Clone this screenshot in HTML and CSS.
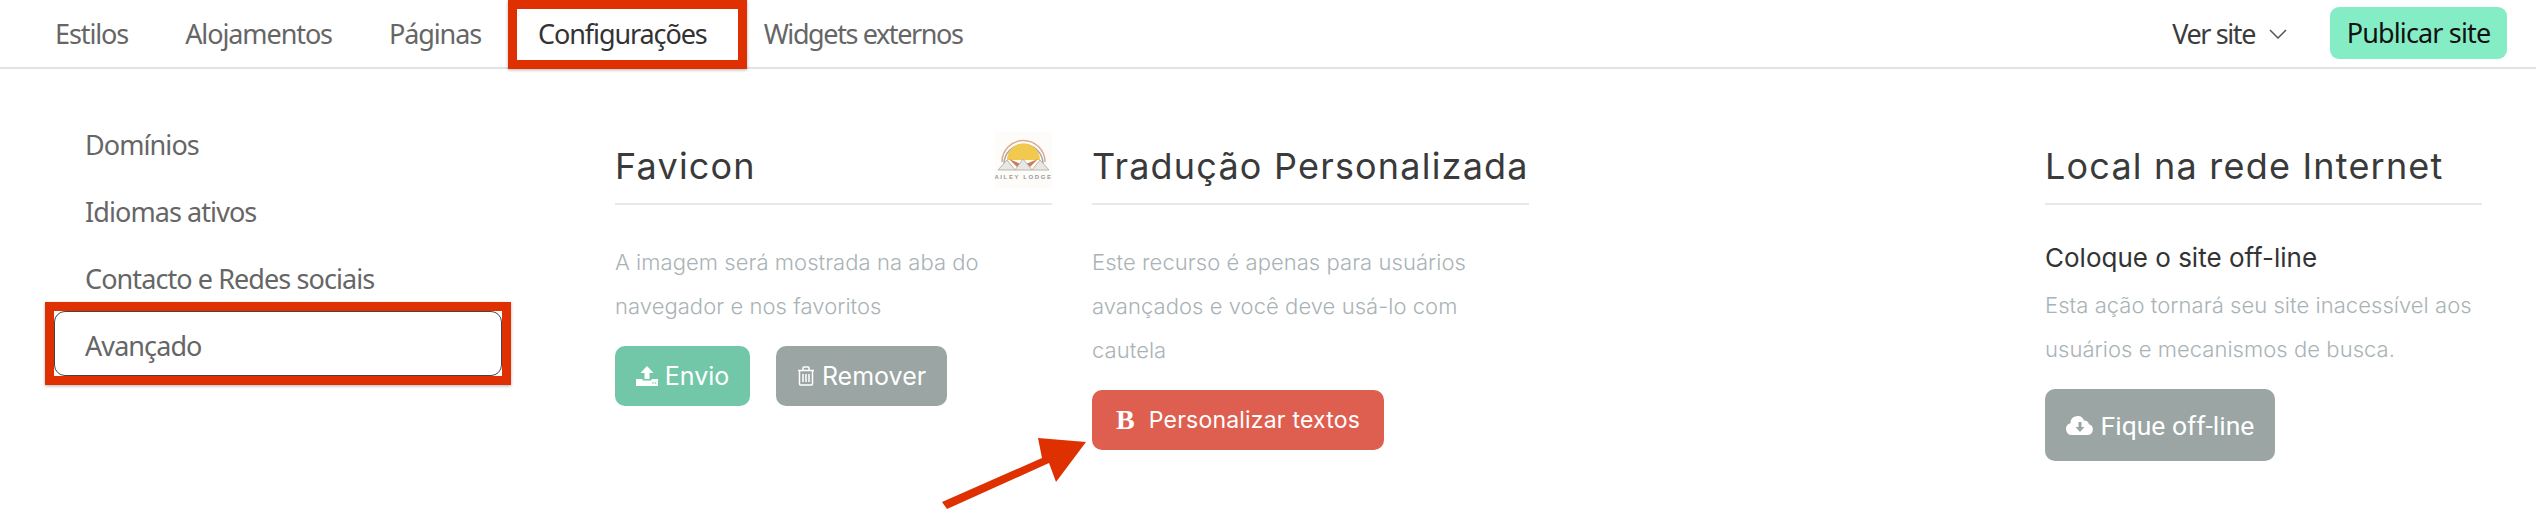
FILE: index.html
```html
<!DOCTYPE html>
<html lang="pt">
<head>
<meta charset="utf-8">
<title>Configurações</title>
<link rel="stylesheet" href="styles.css">
</head>
<body>
<header class="topbar">
  <nav class="tabs">
    <a class="tab">Estilos</a>
    <a class="tab">Alojamentos</a>
    <a class="tab">Páginas</a>
    <a class="tab tab-active">Configurações</a>
    <a class="tab tab-narrow">Widgets externos</a>
  </nav>
  <div class="actions">
    <a class="view-site">Ver site
      <svg class="chevron" viewBox="0 0 18 10" width="18" height="10"><path d="M1 1l8 8 8-8" fill="none" stroke="#555" stroke-width="1.5"/></svg>
    </a>
    <a class="publish">Publicar site</a>
  </div>
</header>
<main class="content">
  <aside class="side">
    <a class="side-item">Domínios</a>
    <a class="side-item">Idiomas ativos</a>
    <a class="side-item">Contacto e Redes sociais</a>
    <a class="side-item side-active">Avançado</a>
  </aside>
  <section class="col">
    <div class="col-head">
      <h2>Favicon</h2>
      <svg class="favicon" viewBox="0 0 57 56" width="57" height="56">
        <rect width="57" height="56" fill="#fdfcf8"/>
        <path d="M7 30a21 21 0 0 1 43 0" fill="none" stroke="#dfa893" stroke-width="1.5"/>
        <path d="M9 32a19 19 0 0 1 39 0" fill="none" stroke="#a9a6a0" stroke-width="1.5"/>
        <path d="M12 28a16.500 16.500 0 0 1 33 0z" fill="#f0c94e"/>
        <path d="M14 27l12 5-4 3zM43 27l-12 5 4 3z" fill="#cf7d50"/>
        <path d="M3 38l9-10 8 10zM20 38l8-11 9 11zM37 38l8-10 9 10z" fill="#e9e7e3" stroke="#b9b7b2"/>
        <text class="favicon-text" x="28.500" y="47" text-anchor="middle">AILEY LODGE</text>
      </svg>
    </div>
    <p class="muted">A imagem será mostrada na aba do navegador e nos favoritos</p>
    <div class="btn-row">
      <a class="btn btn-green">
        <svg class="ico" viewBox="0 0 22 20" width="22" height="20"><path d="M11 0l6.500 7H13.500v6h-5V7H4.500z" fill="#fff"/><path d="M0 13h6.500v1.500h9V13H22v7H0z" fill="#fff"/><circle cx="17" cy="17" r=".8" fill="#71c7a7"/><circle cx="19.500" cy="17" r=".8" fill="#71c7a7"/></svg>
        Envio
      </a>
      <a class="btn btn-gray">
        <svg class="ico" viewBox="0 0 18 20" width="18" height="20"><path d="M1 4.500h16M6 4.500V2a1 1 0 0 1 1-1h4a1 1 0 0 1 1 1v2.500M2.500 4.500V18a1 1 0 0 0 1 1h11a1 1 0 0 0 1-1V4.500M6 8v8M9 8v8M12 8v8" fill="none" stroke="#fff" stroke-width="1.500"/></svg>
        Remover
      </a>
    </div>
  </section>
  <section class="col">
    <div class="col-head">
      <h2>Tradução Personalizada</h2>
    </div>
    <p class="muted">Este recurso é apenas para usuários avançados e você deve usá-lo com cautela</p>
    <div class="btn-row">
      <a class="btn btn-red"><b class="btn-b">B</b>Personalizar textos</a>
    </div>
  </section>
  <section class="col col-last">
    <div class="col-head">
      <h2>Local na rede Internet</h2>
    </div>
    <h3>Coloque o site off-line</h3>
    <p class="muted">Esta ação tornará seu site inacessível aos usuários e mecanismos de busca.</p>
    <div class="btn-row">
      <a class="btn btn-offline">
        <svg class="ico" viewBox="0 0 28 20" width="28" height="20"><path d="M6 20a6 6 0 0 1-1.500-11.800A7 7 0 0 1 18 5.500a5 5 0 0 1 5 3.800A5.500 5.500 0 0 1 22 20z" fill="#fff"/><path d="M12.500 7h3v5h3l-4.500 5-4.500-5h3z" fill="#9aa5a4"/></svg>
        Fique off-line
      </a>
    </div>
  </section>
</main>
<div class="mark mark-tab"></div>
<div class="mark mark-side"></div>
<svg class="arrow" viewBox="0 0 160 80" width="160" height="80">
  <path d="M2 72l100-44-4-20 48 4-30 40-7-19-102 46z" fill="#de3000"/>
</svg>
</body>
</html>
```
FILE: styles.css
```css
* { box-sizing: border-box; }
html, body { margin: 0; padding: 0; }
body {
  width: 2536px;
  height: 514px;
  overflow: hidden;
  position: relative;
  background: #fff;
  font-family: "Noto Sans", sans-serif;
}
.topbar {
  height: 69px;
  display: flex;
  align-items: center;
  justify-content: space-between;
  padding: 0 29px 0 55px;
  border-bottom: 2px solid #e2e2e2;
}
.tabs { display: flex; gap: 57px; }
.tab {
  font-size: 27px;
  letter-spacing: -1.1px;
  color: #666;
}
.tab-active { color: #333; }
.tab-narrow { letter-spacing: -1.4px; }
.actions { display: flex; align-items: center; gap: 43px; }
.view-site {
  display: flex;
  align-items: center;
  gap: 14px;
  font-size: 27px;
  letter-spacing: -1.4px;
  color: #3c3c3c;
}
.publish {
  width: 177px;
  height: 52px;
  margin-bottom: 2px;
  display: flex;
  align-items: center;
  justify-content: center;
  background: #85edc5;
  border-radius: 9px;
  font-size: 27px;
  letter-spacing: -.85px;
  color: #111;
}
.content {
  display: flex;
  align-items: flex-start;
  padding: 0 54px 0 53px;
}
.side {
  width: 449px;
  margin-right: 113px;
  padding-top: 42px;
  display: flex;
  flex-direction: column;
}
.side-item {
  height: 67px;
  line-height: 67px;
  padding-left: 32px;
  font-size: 27px;
  letter-spacing: -.92px;
  color: #666;
}
.side-active { height: 65px; line-height: 66px; margin-top: 1px; }
.col { width: 437px; margin-right: 40px; }
.col-last { margin-left: auto; margin-right: 0; }
.col-head {
  height: 136px;
  padding-top: 75px;
  border-bottom: 2px solid #e8eaea;
  position: relative;
}
.col-head h2 {
  margin: 0;
  font-family: Inter, sans-serif;
  font-weight: 400;
  font-size: 36px;
  line-height: 44px;
  letter-spacing: 1.2px;
  white-space: nowrap;
  color: #3a3a3a;
}
.favicon { position: absolute; right: 0; top: 63px; }
.favicon-text { font: 700 6px "Liberation Sans", sans-serif; letter-spacing: 1.6px; fill: #999; }
.col h3 {
  margin: 33px 0 0;
  font-family: Inter, sans-serif;
  font-weight: 400;
  font-size: 26px;
  line-height: 40px;
  color: #333;
}
.muted {
  margin: 35px 0 0;
  font-family: Inter, sans-serif;
  font-weight: 300;
  font-size: 22px;
  line-height: 44px;
  letter-spacing: .05px;
  color: #a9b3b6;
}
.col-last .muted { margin-top: 5px; }
.btn-row { display: flex; gap: 26px; margin-top: 18px; }
.btn {
  height: 60px;
  display: flex;
  align-items: center;
  justify-content: center;
  border-radius: 10px;
  color: #fff;
  font-family: Inter, sans-serif;
  font-size: 25px;
  font-weight: 400;
}
.ico { flex: none; margin-right: 7px; }
.btn-green { width: 135px; background: #71c7a7; }
.btn-gray { width: 171px; background: #9aa5a4; }
.btn-red { width: 292px; background: #de5f4f; font-size: 23px; letter-spacing: .2px; }
.btn-b { font-family: "Liberation Serif", serif; font-size: 28px; margin-right: 14px; }
.btn-offline {
  width: 230px;
  height: 72px;
  background: #9aa5a4;
  font-family: Roboto, sans-serif;
  font-size: 26.5px;
}
.mark {
  position: absolute;
  border: 9px solid #de3000;
  box-shadow: 0 1px 3px rgba(0, 0, 0, .3);
}
.mark-tab { left: 508px; top: 0; width: 239px; height: 69px; }
.mark-side {
  left: 45px;
  top: 302px;
  width: 466px;
  height: 83px;
}
.mark-side::after {
  content: "";
  position: absolute;
  inset: 0;
  border: 1.500px solid #444;
  border-radius: 11px;
}
.arrow { position: absolute; left: 940px; top: 430px; }
```
